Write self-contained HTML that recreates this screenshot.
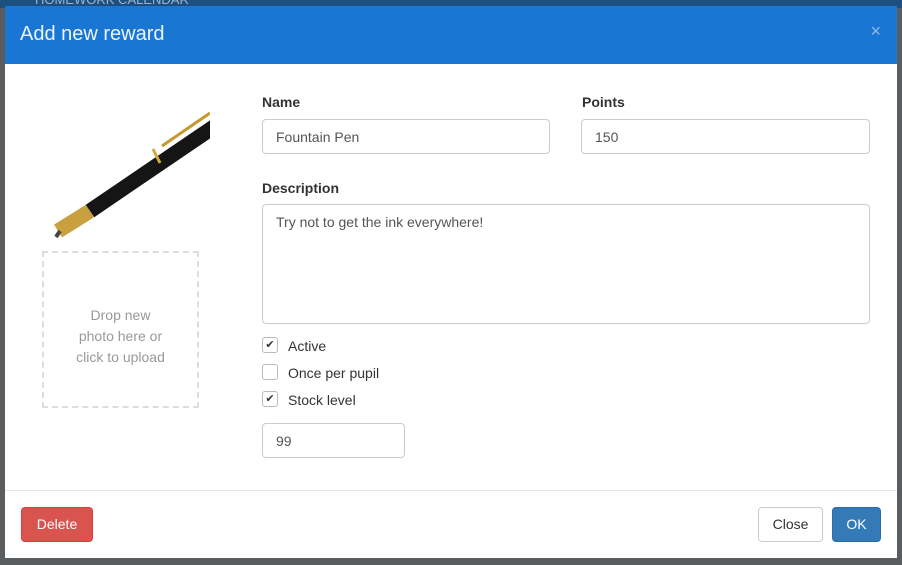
<!DOCTYPE html><html><head><style>
body{margin:0;width:902px;height:565px;background:#5a5d60;position:relative;overflow:hidden;font-family:"Liberation Sans",sans-serif;font-size:14px;color:#333}
.top{position:absolute;left:0;top:0;width:902px;height:8px;background:#1d4f80}
.top span{position:absolute;left:35px;top:-8px;color:#9cb4cc;font-size:13px}
.m{position:absolute;left:5px;top:6px;width:892px;height:552px;background:#fff}
.h{height:58px;background:#1976d2;color:#fff;position:relative}
.h .t{position:absolute;left:15px;top:17px;font-size:20px;color:#eef4fb}
.h .x{position:absolute;right:16px;top:15px;font-size:18px;color:#8fb8e6}
.lbl{position:absolute;font-weight:bold;font-size:14px;color:#333}
.in{position:absolute;border:1px solid #ccc;border-radius:4px;box-sizing:border-box;padding:9px 13px;color:#555;font-size:14px}
.cb{position:absolute;left:257px;width:16px;height:16px;border:1px solid #bbb;border-radius:3px;box-sizing:border-box;font-size:11px;text-align:center;line-height:14px;color:#333}
.ct{position:absolute;left:283px;font-size:14px;color:#333}
.drop{position:absolute;left:37px;top:245px;width:157px;height:157px;border:2px dashed #ddd;box-sizing:border-box;text-align:center;color:#999;font-size:14px;line-height:21px;padding-top:52px}
.btn{position:absolute;top:501px;height:35px;border-radius:4px;box-sizing:border-box;font-size:14px;text-align:center;line-height:33px}
</style></head><body>
<div class="top"><span>HOMEWORK CALENDAR</span></div>
<div class="m">
<div class="h"><div class="t">Add new reward</div><div class="x">×</div></div>
<svg style="position:absolute;left:45px;top:85px" width="160" height="150"><rect width="160" height="150" fill="#fff"/>
<line x1="8" y1="140" x2="40" y2="120" stroke="#c9a040" stroke-width="15"/>
<line x1="40" y1="120" x2="165" y2="35" stroke="#151515" stroke-width="15"/>
<line x1="112" y1="55" x2="160" y2="22" stroke="#c49a30" stroke-width="3"/>
<line x1="103" y1="58" x2="110" y2="72" stroke="#d4a840" stroke-width="3"/>
<line x1="6" y1="146" x2="10" y2="140" stroke="#444" stroke-width="4"/></svg>
<div class="drop">Drop new<br>photo here or<br>click to upload</div>
<div class="lbl" style="left:257px;top:88px">Name</div>
<div class="in" style="left:257px;top:113px;width:288px;height:35px">Fountain Pen</div>
<div class="lbl" style="left:577px;top:88px">Points</div>
<div class="in" style="left:576px;top:113px;width:289px;height:35px">150</div>
<div class="lbl" style="left:257px;top:174px">Description</div>
<div class="in" style="left:257px;top:198px;width:608px;height:120px">Try not to get the ink everywhere!</div>
<div class="cb" style="top:331px">✔</div><div class="ct" style="top:332px">Active</div>
<div class="cb" style="top:358px"></div><div class="ct" style="top:359px">Once per pupil</div>
<div class="cb" style="top:385px">✔</div><div class="ct" style="top:386px">Stock level</div>
<div class="in" style="left:257px;top:417px;width:143px;height:35px">99</div>
<div style="position:absolute;left:0;top:484px;width:892px;border-top:1px solid #e5e5e5"></div>
<div class="btn" style="left:16px;width:72px;background:#d9534f;border:1px solid #d43f3a;color:#fff">Delete</div>
<div class="btn" style="left:753px;width:65px;background:#fff;border:1px solid #ccc;color:#333">Close</div>
<div class="btn" style="left:827px;width:49px;background:#337ab7;border:1px solid #2e6da4;color:#fff">OK</div>
</div>
</body></html>
